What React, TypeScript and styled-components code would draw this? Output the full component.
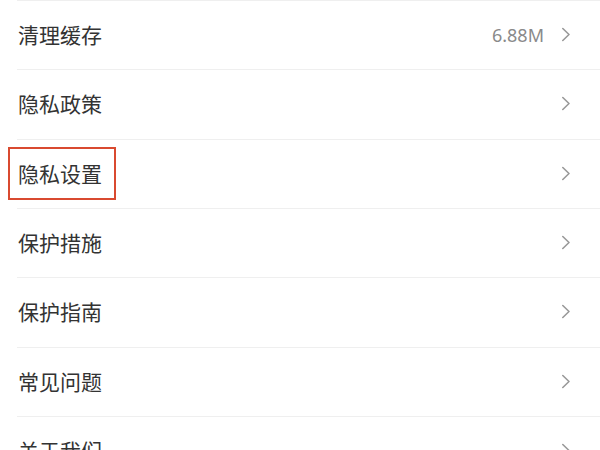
import styled, { createGlobalStyle } from "styled-components";

const GlobalStyle = createGlobalStyle`
  html, body {
    margin: 0;
    padding: 0;
    background: #ffffff;
  }
  body {
    font-family: "Noto Sans CJK SC", "Noto Sans", sans-serif;
    overflow: hidden;
  }
`;

const List = styled.div`
  display: flex;
  flex-direction: column;
  background: #fff;
`;

const Row = styled.div`
  position: relative;
  display: flex;
  align-items: center;
  justify-content: space-between;
  height: 69.33px;
  box-sizing: border-box;
  padding: 0 29px 0 18px;
  flex-shrink: 0;

  &::before {
    content: "";
    position: absolute;
    top: 0;
    left: 17px;
    right: 0;
    height: 1px;
    background: #efefef;
  }
`;

const Label = styled.span<{ $highlighted?: boolean }>`
  font-size: 21px;
  line-height: 1;
  color: #333;
  ${(p) =>
    p.$highlighted &&
    `
    border: 2px solid #d94a30;
    padding: 14px 12px 14px 8px;
    margin: -16px 0 -16px -10px;
  `}
`;

const Right = styled.div`
  display: flex;
  align-items: center;
  gap: 17px;
`;

const Value = styled.span`
  font-family: "Noto Sans", sans-serif;
  font-size: 18px;
  color: #8a8a8a;
`;

const Chevron = () => (
  <svg width="10" height="15" viewBox="0 0 10 15" fill="none">
    <polyline
      points="1.8,1.5 8,7.5 1.8,13.5"
      stroke="#999"
      strokeWidth="1.6"
      strokeLinecap="round"
      strokeLinejoin="round"
    />
  </svg>
);

const items: { label: string; value?: string; highlighted?: boolean }[] = [
  { label: "清理缓存", value: "6.88M" },
  { label: "隐私政策" },
  { label: "隐私设置", highlighted: true },
  { label: "保护措施" },
  { label: "保护指南" },
  { label: "常见问题" },
  { label: "关于我们" },
];

export default function App() {
  return (
    <>
      <GlobalStyle />
      <List>
        {items.map((item) => (
          <Row key={item.label}>
            <Label $highlighted={item.highlighted}>{item.label}</Label>
            <Right>
              {item.value && <Value>{item.value}</Value>}
              <Chevron />
            </Right>
          </Row>
        ))}
      </List>
    </>
  );
}
